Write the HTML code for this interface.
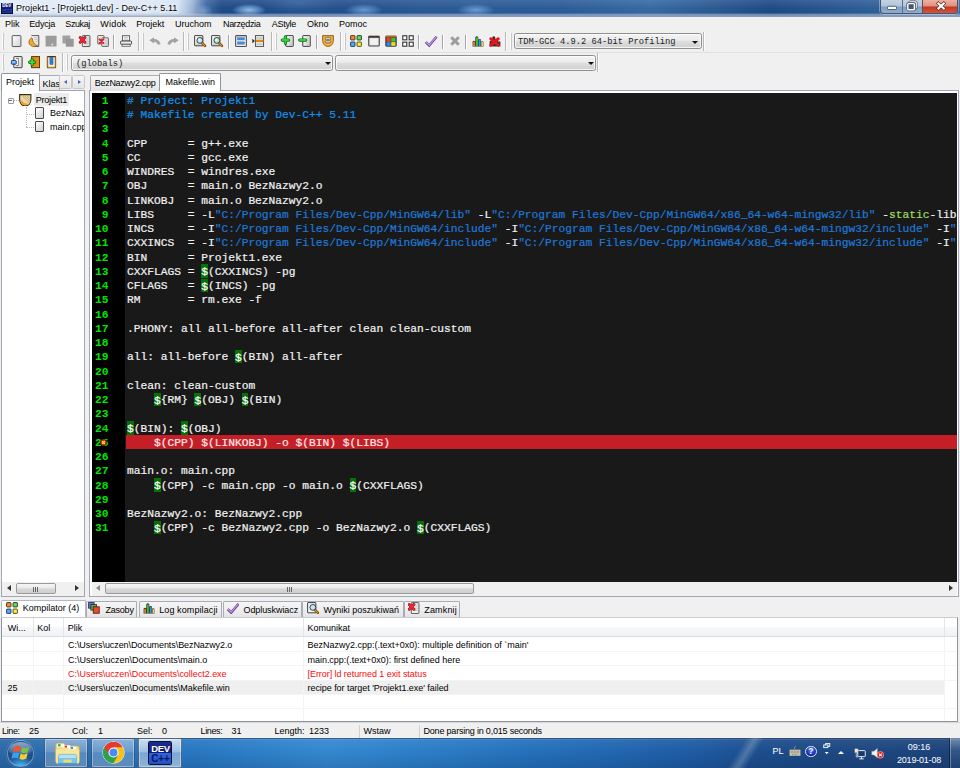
<!DOCTYPE html>
<html lang="pl">
<head>
<meta charset="utf-8">
<title>Projekt1 - [Projekt1.dev] - Dev-C++ 5.11</title>
<style>
*{box-sizing:border-box;margin:0;padding:0}
html,body{width:960px;height:768px;overflow:hidden;background:#f0f0f0}
body{position:relative;font-family:"Liberation Sans",sans-serif;font-size:9px;color:#000;line-height:1}
#app div{position:absolute}
#app{position:absolute;left:0;top:0;width:960px;height:768px;overflow:hidden}
.t{white-space:nowrap;font-size:9px;line-height:11px;height:11px}
/* title bar */
#title{left:0;top:0;width:960px;height:17px;background:
linear-gradient(180deg,rgba(255,255,255,0) 0,rgba(255,255,255,0) 76%,rgba(190,206,228,.55) 86%,rgba(150,168,196,.95) 100%),
linear-gradient(90deg,#e3ecf8 0,#dee8f6 150px,#d6e3f3 178px,rgba(190,210,236,.8) 192px,rgba(120,160,210,.35) 206px,rgba(80,120,180,0) 222px),
radial-gradient(ellipse 17px 6px at 249px 10px,rgba(150,195,238,.95),rgba(130,180,230,.5) 60%,rgba(120,170,225,0)),
radial-gradient(ellipse 9px 7px at 204px 11px,rgba(150,180,220,.6),rgba(120,170,225,0)),
radial-gradient(ellipse 19px 6px at 364px 10px,rgba(120,170,222,.8),rgba(110,160,215,.4) 60%,rgba(120,170,225,0)),
radial-gradient(ellipse 19px 6px at 476px 10px,rgba(125,175,226,.8),rgba(110,160,215,.4) 60%,rgba(120,170,225,0)),
radial-gradient(ellipse 40px 12px at 300px 3px,rgba(70,115,175,.5),rgba(70,115,175,0)),
linear-gradient(90deg,#204b88 0,#204b88 230px,#234f8c 330px,#2a5994 420px,#2c5c98 560px,#376aa2 650px,#2a5890 720px,#1f4a85 770px,#2c5a94 850px,#35649c 900px,#3a689f 960px)}
#title .shade{left:0;top:0;width:960px;height:17px;background:linear-gradient(180deg,rgba(255,255,255,.10) 0,rgba(255,255,255,0) 50%,rgba(0,0,0,.04) 100%)}
#title .edge{left:0;top:16.500px;width:960px;height:.5px;background:#8e9bb0}
/* menu */
#menu{left:0;top:17px;width:960px;height:15px;background:#f0f0f0}

/* window buttons */
#wb{left:880px;top:0;width:78px;height:14px;border:1px solid #44556e;border-top:none;border-radius:0 0 4px 4px;overflow:hidden;box-shadow:0 0 0 1px rgba(255,255,255,.35)}
#wb .b{top:0;height:13px;background:linear-gradient(180deg,#c3d1e4 0,#b2c4dc 48%,#809fc5 52%,#8fadd0 100%)}
#wb .x{background:linear-gradient(180deg,#eeb0a2 0,#e08e7e 48%,#c5361f 52%,#d0563c 100%)}
/* toolbars */
.grip{width:2px;height:17px;border-left:1px solid #fbfbfb;border-right:1px solid #c6c6c6}
.tend{width:2px;height:19px;border-left:1px solid #b8b8b8;border-right:1px solid #fbfbfb}
.sep{width:2px;height:14px;border-left:1px solid #a5a5a5;border-right:1px solid #fff}
.ic{width:12px;height:12px}
.ic svg{position:absolute;left:0;top:0;width:12px;height:12px;overflow:visible}
.combo{height:16px;border:1px solid #8e8f8f;border-radius:2.5px;background:linear-gradient(180deg,#f4f4f4 0,#ebebeb 45%,#dedede 50%,#d0d0d0 100%);box-shadow:inset 0 0 0 1px rgba(255,255,255,.75)}
.combo .arr{width:0;height:0;border-left:3px solid transparent;border-right:3px solid transparent;border-top:3.500px solid #111}
.mono{font-family:"Liberation Mono",monospace;font-size:8.75px;line-height:11px;white-space:pre;color:#222}

.tab{background:linear-gradient(180deg,#f5f5f5 0,#eeeeee 50%,#e4e4e4 100%);border:1px solid #a9adb3;border-bottom:none;border-radius:1.500px 1.500px 0 0}
.tab.act{background:#fff;border-color:#8e959e}
.sbtn{width:12.500px;height:14px;background:linear-gradient(180deg,#f6f6f6,#e4e4e4);border:1px solid #c8c8c8;border-radius:1.500px}
.sbtn div{width:0;height:0}
.fi{width:9px;height:11.700px;border:1px solid #4a4a4a;border-radius:1px;background:linear-gradient(135deg,#fff,#d0d0d0)}
.al{width:0;height:0;border-top:3px solid transparent;border-bottom:3px solid transparent;border-right:4px solid #333}
.ar{width:0;height:0;border-top:3px solid transparent;border-bottom:3px solid transparent;border-left:4px solid #333}
.thumb{border:1px solid #9a9a9a;border-radius:2px;background:linear-gradient(180deg,#f6f6f6 0,#e9e9e9 48%,#d8d8d8 52%,#cfcfcf 100%)}
.gr{width:5px;height:4.500px;background:repeating-linear-gradient(90deg,#666 0,#666 1px,transparent 1px,transparent 2px)}
.vs{width:1px;background:#e2e5ea}
.vg{width:1px;background:#f4f4f4}
.row{left:0;width:957px;height:14.250px;border-bottom:1px solid #f4f4f4}
.row.err .t{color:#f60c0c}
.row.sel{background:#efefef;width:942px}

.tbb{width:44px;height:29.500px;border:1px solid rgba(20,45,80,.55);border-radius:2px;background:linear-gradient(180deg,rgba(255,255,255,.42) 0,rgba(255,255,255,.3) 45%,rgba(255,255,255,.2) 50%,rgba(255,255,255,.26) 100%);box-shadow:inset 0 0 0 1px rgba(255,255,255,.35)}
.tbb.on{background:linear-gradient(180deg,rgba(255,255,255,.75) 0,rgba(255,255,255,.55) 45%,rgba(255,255,255,.38) 50%,rgba(255,255,255,.5) 100%)}
/* editor */
#code{left:92px;top:93px;width:864.500px;height:488.600px;background:#191919;overflow:hidden}
#gutter{left:0;top:0;width:33px;height:489px;background:#000}
.ln{letter-spacing:-.008px;-webkit-text-stroke:.22px currentColor;left:0;width:900px;height:14.25px;font-family:"Liberation Mono","DejaVu Sans Mono",monospace;font-size:11.25px;line-height:14.25px;white-space:pre;color:#f0f0f0}
.ln .n{left:0;top:0;width:16.5px;height:14.25px;text-align:right;font-weight:bold;color:#00e400;-webkit-text-stroke:0}
.ln .c{left:35px;top:0;height:14.25px}
.ln i{font-style:normal;color:#1290ea}
.ln u{text-decoration:none;background:#047204;color:#fff;padding-top:1.500px}
.ln s{text-decoration:none;color:#1f78d6}
.ln em{font-style:normal;color:#9fdc5c}
.hl .c{color:#ffe6e6}
#hb{left:34px;top:341.800px;width:900px;height:14.600px;background:#c41f27}
</style>
</head>
<body>
<div id="app">
<div id="title"><div class="shade"></div><div class="edge"></div>
<div style="left:1px;top:2.500px;width:11.500px;height:11px;background:linear-gradient(180deg,#1a2a8a 0,#141c70 50%,#2a4ab8 52%,#16309a 100%);border:1px solid #0a0f3a"></div>
<div class="t" style="left:1.500px;top:2.500px;width:10.500px;height:6px;line-height:6px;font-size:4.500px;font-weight:bold;color:#fff;text-align:center;letter-spacing:-.1px">DEV</div>
<div class="t" style="left:1.500px;top:7.500px;width:10.500px;height:6px;line-height:6px;font-size:4.500px;font-weight:bold;color:#12124a;text-align:center">C++</div>
<div class="t" style="left:16px;top:3px;letter-spacing:.05px;text-shadow:0 0 3px #fff,0 0 5px #fff">Projekt1 - [Projekt1.dev] - Dev-C++ 5.11</div>
</div>
<div id="menu">
<div class="t" style="left:5px;top:2px">Plik</div>
<div class="t" style="left:29.300px;top:2px;letter-spacing:-.2px">Edycja</div>
<div class="t" style="left:65.300px;top:2px;letter-spacing:-.4px">Szukaj</div>
<div class="t" style="left:100.300px;top:2px;letter-spacing:.2px">Widok</div>
<div class="t" style="left:136.300px;top:2px">Projekt</div>
<div class="t" style="left:175px;top:2px">Uruchom</div>
<div class="t" style="left:223px;top:2px;letter-spacing:-.35px">Narzędzia</div>
<div class="t" style="left:271.800px;top:2px;letter-spacing:-.3px">AStyle</div>
<div class="t" style="left:307px;top:2px">Okno</div>
<div class="t" style="left:339px;top:2px">Pomoc</div>
</div>
<div id="wb">
<div class="b" style="left:0;width:21px"><svg width="21" height="13" viewBox="0 0 21 13" style="position:absolute;left:0;top:0"><rect x="6.5" y="6.3" width="9" height="3.2" rx="0.8" fill="#fff" stroke="#44536b" stroke-width="0.9"/></svg></div>
<div class="b" style="left:21px;width:20px;border-left:1px solid #5b6d88"><svg width="20" height="13" viewBox="0 0 20 13" style="position:absolute;left:0;top:0"><rect x="6.6" y="1.9" width="6.6" height="6.2" rx="0.8" fill="none" stroke="#44536b" stroke-width="2.6"/><rect x="6.6" y="1.9" width="6.6" height="6.2" rx="0.8" fill="none" stroke="#fff" stroke-width="1.2"/><rect x="4.8" y="3.6" width="6.6" height="6.2" rx="0.8" fill="#9db3cf" stroke="#44536b" stroke-width="2.8"/><rect x="4.8" y="3.6" width="6.6" height="6.2" rx="0.8" fill="#46566e" stroke="#fff" stroke-width="1.4"/></svg></div>
<div class="b x" style="left:41px;width:36px;border-left:1px solid #6b4a4a"><svg width="36" height="13" viewBox="0 0 36 13" style="position:absolute;left:0;top:0"><path d="M15.400 3.400 L20.800 8.400 M20.800 3.400 L15.400 8.400" stroke="#5a2a24" stroke-width="3.400" stroke-linecap="square"/><path d="M15.400 3.400 L20.800 8.400 M20.800 3.400 L15.400 8.400" stroke="#fff" stroke-width="2.100" stroke-linecap="square"/></svg></div>
</div>

<!-- toolbar row 1 -->
<div id="tb1" style="left:0;top:32px;width:960px;height:20px">
<div class="grip" style="left:2px;top:1px"></div>
<div class="ic" style="left:11px;top:3px"><svg viewBox="0 0 16 16"><defs><linearGradient id="pg" x1="0" y1="0" x2="1" y2="1"><stop offset="0" stop-color="#fff"/><stop offset="1" stop-color="#d4d4d4"/></linearGradient></defs><rect x="1.6" y="0.8" width="11.6" height="14.6" rx="0.8" fill="url(#pg)" stroke="#4a4a4a" stroke-width="1.2"/></svg></div>
<div class="ic" style="left:28px;top:3px"><svg viewBox="0 0 16 16"><path d="M4.600 0.800 H14.400 V15.200 H8" fill="url(#pg)" stroke="#4a4a4a" stroke-width="1.200"/><path d="M7.500 3.500h5M8 6h4.500M9.500 8.500h3" stroke="#b8b8b8" stroke-width="0.900"/><path d="M5 3.600 C3 4.600 1 7.500 1.200 10 C1.500 13.500 5 15.400 8.500 15.400 C10.500 15.400 12 15.200 13.200 14.800 C9.500 13.800 6 10 5.600 4Z" fill="#f5a928" stroke="#7a4a10" stroke-width="0.900"/></svg></div>
<div class="ic" style="left:45px;top:3px"><svg viewBox="0 0 16 16"><rect x="0.800" y="1" width="14.6" height="14.4" rx="0.8" fill="#9b9b9b"/><rect x="8.6" y="11.6" width="2.2" height="2.2" fill="#e8e8e8"/></svg></div>
<div class="ic" style="left:62px;top:3px"><svg viewBox="0 0 16 16"><rect x="0.600" y="0.800" width="10.4" height="10.4" rx="0.8" fill="#a2a2a2"/><rect x="5" y="5" width="10.6" height="10.6" rx="0.8" fill="#979797"/></svg></div>
<div class="ic" style="left:79px;top:3px"><svg viewBox="0 0 16 16"><rect x="4.400" y="0.800" width="10.2" height="14.6" rx="0.8" fill="url(#pg)" stroke="#4a4a4a" stroke-width="1.2"/><path d="M9 4h4M9 6.500h4M9 9h4M9 11.500h4" stroke="#b0b0b0" stroke-width="0.9"/><path d="M1.600 3.400 L7.800 9.600 M7.800 3.400 L1.600 9.600" stroke="#8a1018" stroke-width="4" stroke-linecap="round"/><path d="M1.600 3.400 L7.800 9.600 M7.800 3.400 L1.600 9.600" stroke="#ee2630" stroke-width="2.800" stroke-linecap="round"/></svg></div>
<div class="ic" style="left:97px;top:3px"><svg viewBox="0 0 16 16"><rect x="1" y="0.800" width="8.4" height="11" rx="0.6" fill="url(#pg)" stroke="#4a4a4a" stroke-width="1.100"/><rect x="6.400" y="3.800" width="8.8" height="11.4" rx="0.6" fill="url(#pg)" stroke="#4a4a4a" stroke-width="1.100"/><path d="M10 7h4M10 9.500h4M10 12h4" stroke="#b0b0b0" stroke-width="0.9"/><path d="M3.400 5.600 L8.600 10.800 M8.600 5.600 L3.400 10.800" stroke="#e0202a" stroke-width="2.6" stroke-linecap="round"/></svg></div>
<div class="sep" style="left:113px;top:3px"></div>
<div class="ic" style="left:120px;top:3px"><svg viewBox="0 0 16 16"><rect x="3.400" y="1" width="9.4" height="7" fill="#f4f4f4" stroke="#4a4a4a" stroke-width="1.100"/><path d="M5.500 3.500h5M5.500 5.500h5" stroke="#aaa" stroke-width="0.8"/><rect x="0.800" y="8" width="14.6" height="4.400" rx="1" fill="#e8e8e8" stroke="#3c3c3c" stroke-width="1.200"/><rect x="2.600" y="12.400" width="11" height="2.600" fill="#fafafa" stroke="#4a4a4a" stroke-width="1"/></svg></div>
<div class="tend" style="left:138px;top:0"></div>
<div class="grip" style="left:142px;top:1px"></div>
<div class="ic" style="left:149px;top:3px"><svg viewBox="0 0 16 16"><path d="M0.600 7 L6.600 3 V5.200 C10.500 5.200 14.600 7.400 15.400 12.200 L11.600 13 C11 10.400 9 9 6.600 9 V11.200Z" fill="#a2a2a2"/></svg></div>
<div class="ic" style="left:166.500px;top:3px"><svg viewBox="0 0 16 16"><path d="M15.400 7 L9.400 3 V5.200 C5.500 5.200 1.400 7.400 0.600 12.200 L4.400 13 C5 10.400 7 9 9.400 9 V11.200Z" fill="#a2a2a2"/></svg></div>
<div class="tend" style="left:183px;top:0"></div>
<div class="grip" style="left:187px;top:1px"></div>
<div class="ic" style="left:194px;top:3px"><svg viewBox="0 0 16 16"><rect x="0.800" y="0.800" width="11" height="13.6" rx="0.6" fill="url(#pg)" stroke="#3c3c3c" stroke-width="1.300"/><path d="M2.500 10.500h3M2.500 12.500h5" stroke="#bbb" stroke-width="0.8"/><path d="M10.500 10.500 L14.600 14.600" stroke="#4a3008" stroke-width="3.400" stroke-linecap="round"/><path d="M10.500 10.500 L14.600 14.600" stroke="#e08a10" stroke-width="1.900" stroke-linecap="round"/><circle cx="7.800" cy="7.200" r="3.900" fill="#bfe6fb" stroke="#3c3c3c" stroke-width="1.300"/><circle cx="7" cy="6.400" r="1.400" fill="#fff" opacity=".8"/></svg></div>
<div class="ic" style="left:211px;top:3px"><svg viewBox="0 0 16 16"><rect x="0.800" y="0.800" width="11" height="13.6" rx="0.6" fill="url(#pg)" stroke="#3c3c3c" stroke-width="1.300"/><path d="M2.500 10.500h3M2.500 12.500h5" stroke="#bbb" stroke-width="0.8"/><path d="M10.500 10.500 L14.600 14.600" stroke="#4a3008" stroke-width="3.400" stroke-linecap="round"/><path d="M10.500 10.500 L14.600 14.600" stroke="#e08a10" stroke-width="1.900" stroke-linecap="round"/><circle cx="7.800" cy="7.200" r="3.900" fill="#b6f0d2" stroke="#3c3c3c" stroke-width="1.300"/><circle cx="7" cy="6.400" r="1.400" fill="#fff" opacity=".8"/></svg></div>
<div class="sep" style="left:228px;top:3px"></div>
<div class="ic" style="left:234.500px;top:3px"><svg viewBox="0 0 16 16"><rect x="0.800" y="0.800" width="14.400" height="14.400" rx="1" fill="#e9e9e9" stroke="#505050" stroke-width="1.400"/><rect x="3.400" y="3.600" width="9.200" height="3" fill="#3f8fe8" stroke="#2a5fa8" stroke-width="0.500"/><rect x="3.400" y="9.200" width="9.200" height="3" fill="#3f8fe8" stroke="#2a5fa8" stroke-width="0.500"/></svg></div>
<div class="ic" style="left:251.500px;top:3px"><svg viewBox="0 0 16 16"><rect x="4.600" y="0.800" width="10.800" height="14.400" fill="#f2f2f2" stroke="#505050" stroke-width="1.300"/><path d="M5.500 4h9M5.500 12.200h9" stroke="#8a8a8a" stroke-width="0.9"/><rect x="5.200" y="6.200" width="9.800" height="3.400" fill="#d88a1c"/><path d="M0.400 5 L3.800 8 L0.400 11Z" fill="#222"/></svg></div>
<div class="tend" style="left:271px;top:0"></div>
<div class="grip" style="left:275px;top:1px"></div>
<div class="ic" style="left:282px;top:3px"><svg viewBox="0 0 16 16"><rect x="5" y="0.800" width="10" height="14.400" rx="0.600" fill="url(#pg)" stroke="#3c3c3c" stroke-width="1.300"/><path d="M9.500 4h4M9.500 7h4M9.500 10h4M9.500 12.500h4" stroke="#b8b8b8" stroke-width="0.9"/><path d="M4.600 2.400 V11 M0.400 6.700 H8.800" stroke="#0c6e12" stroke-width="4.400" stroke-linecap="round"/><path d="M4.600 2.600 V10.800 M0.600 6.700 H8.600" stroke="#2fd23a" stroke-width="2.600" stroke-linecap="round"/></svg></div>
<div class="ic" style="left:299px;top:3px"><svg viewBox="0 0 16 16"><rect x="5" y="0.800" width="10" height="14.400" rx="0.600" fill="url(#pg)" stroke="#3c3c3c" stroke-width="1.300"/><path d="M9.500 4h4M9.500 7h4M9.500 10h4M9.500 12.500h4" stroke="#b8b8b8" stroke-width="0.9"/><path d="M1 6.700 H9" stroke="#0c6e12" stroke-width="4.400" stroke-linecap="round"/><path d="M1.200 6.700 H8.800" stroke="#2fd23a" stroke-width="2.600" stroke-linecap="round"/></svg></div>
<div class="sep" style="left:316px;top:3px"></div>
<div class="ic" style="left:322px;top:3px"><svg viewBox="0 0 16 16"><path d="M0.800 0.800 H15.200 V7 C15.200 12 12 15.200 8 15.200 C4 15.200 0.800 12 0.800 7Z" fill="#f6ad2e" stroke="#8a5a10" stroke-width="1.200"/><rect x="4.400" y="3.400" width="7.200" height="2.800" rx="1.200" fill="#d6d6d6" stroke="#555" stroke-width="0.900"/><rect x="4.400" y="7.600" width="7.200" height="2.800" rx="1.200" fill="#d6d6d6" stroke="#555" stroke-width="0.900"/></svg></div>
<div class="tend" style="left:339.500px;top:0"></div>
<div class="grip" style="left:343.500px;top:1px"></div>
<div class="ic" style="left:350px;top:3px"><svg viewBox="0 0 16 16"><rect x="0.800" y="0.800" width="5.800" height="5.800" rx="0.700" fill="#f58a3a" stroke="#4a2a10" stroke-width="1.200"/><rect x="9.400" y="0.800" width="5.800" height="5.800" rx="0.700" fill="#6ada58" stroke="#143a10" stroke-width="1.200"/><rect x="0.800" y="9.400" width="5.800" height="5.800" rx="0.700" fill="#58acf4" stroke="#10305a" stroke-width="1.200"/><rect x="9.400" y="9.400" width="5.800" height="5.800" rx="0.700" fill="#f8ee48" stroke="#4a4410" stroke-width="1.200"/></svg></div>
<div class="ic" style="left:367.500px;top:3px"><svg viewBox="0 0 16 16"><rect x="1" y="1.600" width="14" height="13" rx="0.800" fill="#e6e6e6" stroke="#3a3a3a" stroke-width="1.400"/><rect x="1" y="1.200" width="14" height="2.600" fill="#4a3a2a"/><rect x="3" y="5.400" width="10" height="7.400" fill="#f2f2f2"/></svg></div>
<div class="ic" style="left:384.500px;top:3px"><svg viewBox="0 0 16 16"><rect x="1" y="1.600" width="14" height="13.400" rx="0.800" fill="#444" stroke="#3a3a3a" stroke-width="1.200"/><rect x="1" y="1" width="14" height="2.400" fill="#b86a1a"/><rect x="2" y="4" width="5.600" height="5" fill="#e84020"/><rect x="8.400" y="4" width="5.600" height="5" fill="#3cc030"/><rect x="2" y="9.600" width="5.600" height="4.800" fill="#2a8af0"/><rect x="8.400" y="9.600" width="5.600" height="4.800" fill="#f0e020"/></svg></div>
<div class="ic" style="left:402px;top:3px"><svg viewBox="0 0 16 16"><rect x="1" y="1" width="5.400" height="5.400" fill="#fafafa" stroke="#3a3a3a" stroke-width="1.500"/><rect x="9.600" y="1" width="5.400" height="5.400" fill="#fafafa" stroke="#3a3a3a" stroke-width="1.500"/><rect x="1" y="9.600" width="5.400" height="5.400" fill="#fafafa" stroke="#3a3a3a" stroke-width="1.500"/><rect x="9.600" y="9.600" width="5.400" height="5.400" fill="#fafafa" stroke="#3a3a3a" stroke-width="1.500"/></svg></div>
<div class="sep" style="left:418px;top:3px"></div>
<div class="ic" style="left:425px;top:3px"><svg viewBox="0 0 16 16"><path d="M1 9.500 L5.600 14 L15.400 2.400" fill="none" stroke="#5a3a8a" stroke-width="3.400" stroke-linejoin="miter"/><path d="M1.400 9.600 L5.600 13.400 L15 2.600" fill="none" stroke="#c89af0" stroke-width="1.600"/></svg></div>
<div class="sep" style="left:441.500px;top:3px"></div>
<div class="ic" style="left:448.500px;top:3px"><svg viewBox="0 0 16 16"><path d="M3 3 L13 13 M13 3 L3 13" stroke="#9c9c9c" stroke-width="4" stroke-linecap="butt"/></svg></div>
<div class="sep" style="left:465px;top:3px"></div>
<div class="ic" style="left:472px;top:3px"><svg viewBox="0 0 16 16"><path d="M0.800 15.200 V8.600 Q2.600 7 4.400 8.600 V3 Q6.400 0.500 8.400 3 V6 Q10.200 4.600 12 6 V9 Q13.600 7.800 15.200 9 V15.200Z" fill="#333"/><rect x="1.500" y="9" width="2.400" height="5.800" fill="#f08020"/><rect x="5.100" y="3.200" width="2.800" height="11.600" fill="#40c030"/><rect x="8.900" y="6.200" width="2.600" height="8.600" fill="#3a90f0"/><rect x="12.500" y="9.400" width="2.200" height="5.400" fill="#f4e030"/></svg></div>
<div class="ic" style="left:489px;top:3px"><svg viewBox="0 0 16 16"><path d="M0.800 15.200 V8.600 Q2.600 7 4.400 8.600 V3 Q6.400 0.500 8.400 3 V6 Q10.200 4.600 12 6 V9 Q13.600 7.800 15.200 9 V15.200Z" fill="#333"/><path d="M2.400 5 L12.400 13.600 M12.400 5 L2.400 13.600" stroke="#e8141c" stroke-width="4" stroke-linecap="round"/></svg></div>
<div class="tend" style="left:505px;top:0"></div>
<div class="grip" style="left:509.500px;top:1px"></div>
<div class="combo" style="left:514px;top:1px;width:188px"><div class="mono" style="left:3px;top:3.300px">TDM-GCC 4.9.2 64-bit Profiling</div><div class="arr" style="left:177px;top:6.500px"></div></div>
<div class="tend" style="left:703px;top:0"></div>
</div>

<div style="left:0;top:52px;width:960px;height:1px;background:#e0e0e0"></div>
<!-- toolbar row 2 -->
<div id="tb2" style="left:0;top:53px;width:960px;height:20px">
<div class="grip" style="left:2px;top:1px"></div>
<div class="ic" style="left:11px;top:2.700px"><svg viewBox="0 0 16 16"><rect x="3.800" y="0.800" width="11" height="14.800" rx="0.600" fill="url(#pg)" stroke="#3c3c3c" stroke-width="1.300"/><path d="M6.500 3.200 H9.800 V12.800 H6.500" fill="#fff" stroke="#5a5a5a" stroke-width="1"/><rect x="0.600" y="6" width="6.400" height="5" rx="0.800" fill="#5aa6f2" stroke="#1a2a5a" stroke-width="1.100"/><rect x="1.600" y="7" width="4" height="1.600" fill="#a8d4fa"/></svg></div>
<div class="ic" style="left:28px;top:2.700px"><svg viewBox="0 0 16 16"><rect x="4.800" y="0.800" width="10.600" height="14.800" fill="#e38c0c" stroke="#4a2a08" stroke-width="1.200"/><path d="M5.400 5.200 V11.400 M2.300 8.300 H8.500" stroke="#0a5a10" stroke-width="4.400" stroke-linecap="round"/><path d="M5.400 5.200 V11.400 M2.300 8.300 H8.500" stroke="#34e03c" stroke-width="2.600" stroke-linecap="round"/></svg></div>
<div class="ic" style="left:45.500px;top:2.700px"><svg viewBox="0 0 16 16"><rect x="1.800" y="0.800" width="11" height="14.800" rx="0.600" fill="#f6f2ea" stroke="#5a3408" stroke-width="1.400"/><path d="M2.400 1.400 V15 H12.200 V1.400" fill="none" stroke="#d8880c" stroke-width="1.100"/><rect x="5.200" y="1.600" width="4.200" height="9.800" fill="#1a86e0" stroke="#0c4a98" stroke-width="0.500"/></svg></div>
<div class="tend" style="left:61.500px;top:0"></div>
<div class="grip" style="left:66px;top:1px"></div>
<div class="combo" style="left:71px;top:1.500px;width:262px"><div class="mono" style="left:4px;top:3px">(globals)</div><div class="arr" style="left:253px;top:6px"></div></div>
<div class="combo" style="left:334.500px;top:1.500px;width:261px"><div class="arr" style="left:252.500px;top:6px"></div></div>
<div class="tend" style="left:597px;top:0"></div>
</div>
<!-- left panel -->
<div id="lp" style="left:0;top:72px;width:88px;height:526px">
<div style="left:1px;top:18px;width:84px;height:507px;background:#fff;border:1px solid #a0a7b2"></div>
<div class="tab" style="left:39px;top:3px;width:21px;height:15px;overflow:hidden"><div class="t" style="left:2.500px;top:3px">Klas</div></div>
<div class="tab act" style="left:1px;top:1px;width:39px;height:18px"><div class="t" style="left:4px;top:3px">Projekt</div></div>
<div class="sbtn" style="left:59px;top:2.700px"><div style="left:3.500px;top:4.500px;border-top:2.500px solid transparent;border-bottom:2.500px solid transparent;border-right:3px solid #5060ba"></div></div>
<div class="sbtn" style="left:72px;top:2.700px"><div style="left:5px;top:4.500px;border-top:2.500px solid transparent;border-bottom:2.500px solid transparent;border-left:3px solid #5060ba"></div></div>
<!-- tree -->
<div style="left:7.500px;top:25.500px;width:6px;height:6px;border:1px solid #969696;background:#fcfcfc;border-radius:1px"><div style="left:0.600px;top:1.500px;width:3px;height:1px;background:#4a5a9a"></div></div>
<div style="left:13.500px;top:28px;width:5px;height:0;border-top:1px dotted #bcbcbc"></div>
<div style="left:25.500px;top:35px;width:0;height:20px;border-left:1px dotted #bcbcbc"></div>
<div style="left:25.500px;top:41.800px;width:8px;height:0;border-top:1px dotted #bcbcbc"></div>
<div style="left:25.500px;top:54.800px;width:8px;height:0;border-top:1px dotted #bcbcbc"></div>
<div style="left:19px;top:21.500px;width:13px;height:13px"><svg viewBox="0 0 16 16" width="12.500" height="12.500" style="position:absolute;left:0;top:0"><path d="M0.800 0.800 H15.200 V7 C15.200 12 12 15.200 8 15.200 C4 15.200 0.800 12 0.800 7Z" fill="#e9d6a6" stroke="#3c2c12" stroke-width="1.400"/><path d="M1.600 6 C1.600 12 4.500 14.500 8 14.500 C10 14.500 11.500 13.800 12.600 12.600 C7 12.500 3.500 9.500 1.600 6Z" fill="#f0a020"/><path d="M4 2 L13 11 M7 2 L14.500 9.500 M10 2 L14.500 6.500" stroke="#b89858" stroke-width="0.900"/></svg></div>
<div style="left:34.400px;top:21.400px;width:34.400px;height:12.600px;background:#ebebeb"></div>
<div class="t" style="left:35.700px;top:22.700px;letter-spacing:-.2px">Projekt1</div>
<div class="fi" style="left:35px;top:35.300px"></div>
<div class="fi" style="left:35px;top:48.800px"></div>
<div style="left:0;top:0;width:84px;height:120px;overflow:hidden"><div class="t" style="left:50px;top:36.200px">BezNazwy2.cpp</div><div class="t" style="left:50px;top:49.700px">main.cpp</div></div>
<!-- hscroll -->
<div style="left:2px;top:510px;width:82px;height:13.500px;background:#f0f0f0"></div>
<div class="al" style="left:7px;top:512.500px"></div>
<div class="ar" style="left:74.500px;top:512.500px"></div>
<div class="thumb" style="left:16px;top:510.500px;width:40px;height:11.500px"><div class="gr" style="left:16px;top:3.500px"></div></div>
</div>

<!-- editor tabs + frame -->
<div style="left:88.500px;top:90px;width:870px;height:506.500px;background:#fff;border:1px solid #a0a7b2"></div>
<div class="tab" style="left:90px;top:75px;width:70px;height:15.500px"><div class="t" style="left:3.800px;top:1.800px;letter-spacing:-.3px">BezNazwy2.cpp</div></div>
<div class="tab act" style="left:158.800px;top:72.500px;width:62px;height:18.500px"><div class="t" style="left:5.700px;top:3px">Makefile.win</div></div>
<!-- editor hscroll -->
<div style="left:92px;top:581px;width:865px;height:14.500px;background:#f0f0f0"></div>
<div class="al" style="left:96px;top:585px;border-right-color:#8c8c8c"></div>
<div class="ar" style="left:948.500px;top:585px"></div>
<div class="thumb" style="left:105px;top:582.500px;width:369px;height:11.500px"><div class="gr" style="left:181px;top:3.500px"></div></div>
<div id="code">
<div id="gutter"></div>
<div id="hb"></div>
<div class="ln" style="top:0.75px"><div class="n">1</div><div class="c"><i># Project: Projekt1</i></div></div>
<div class="ln" style="top:15.00px"><div class="n">2</div><div class="c"><i># Makefile created by Dev-C++ 5.11</i></div></div>
<div class="ln" style="top:29.25px"><div class="n">3</div><div class="c"></div></div>
<div class="ln" style="top:43.50px"><div class="n">4</div><div class="c">CPP      = g++.exe</div></div>
<div class="ln" style="top:57.75px"><div class="n">5</div><div class="c">CC       = gcc.exe</div></div>
<div class="ln" style="top:72.00px"><div class="n">6</div><div class="c">WINDRES  = windres.exe</div></div>
<div class="ln" style="top:86.25px"><div class="n">7</div><div class="c">OBJ      = main.o BezNazwy2.o</div></div>
<div class="ln" style="top:100.50px"><div class="n">8</div><div class="c">LINKOBJ  = main.o BezNazwy2.o</div></div>
<div class="ln" style="top:114.75px"><div class="n">9</div><div class="c">LIBS     = -L<s>"C:/Program Files/Dev-Cpp/MinGW64/lib"</s> -L<s>"C:/Program Files/Dev-Cpp/MinGW64/x86_64-w64-mingw32/lib"</s> -<em>static</em>-libgcc -pg</div></div>
<div class="ln" style="top:129.00px"><div class="n">10</div><div class="c">INCS     = -I<s>"C:/Program Files/Dev-Cpp/MinGW64/include"</s> -I<s>"C:/Program Files/Dev-Cpp/MinGW64/x86_64-w64-mingw32/include"</s> -I<s>"C:/Program Files/Dev-Cpp/MinGW64/lib/gcc/x86_64-w64-mingw32/4.9.2/include"</s></div></div>
<div class="ln" style="top:143.25px"><div class="n">11</div><div class="c">CXXINCS  = -I<s>"C:/Program Files/Dev-Cpp/MinGW64/include"</s> -I<s>"C:/Program Files/Dev-Cpp/MinGW64/x86_64-w64-mingw32/include"</s> -I<s>"C:/Program Files/Dev-Cpp/MinGW64/lib/gcc/x86_64-w64-mingw32/4.9.2/include"</s></div></div>
<div class="ln" style="top:157.50px"><div class="n">12</div><div class="c">BIN      = Projekt1.exe</div></div>
<div class="ln" style="top:171.75px"><div class="n">13</div><div class="c">CXXFLAGS = <u>$</u>(CXXINCS) -pg</div></div>
<div class="ln" style="top:186.00px"><div class="n">14</div><div class="c">CFLAGS   = <u>$</u>(INCS) -pg</div></div>
<div class="ln" style="top:200.25px"><div class="n">15</div><div class="c">RM       = rm.exe -f</div></div>
<div class="ln" style="top:214.50px"><div class="n">16</div><div class="c"></div></div>
<div class="ln" style="top:228.75px"><div class="n">17</div><div class="c">.PHONY: all all-before all-after clean clean-custom</div></div>
<div class="ln" style="top:243.00px"><div class="n">18</div><div class="c"></div></div>
<div class="ln" style="top:257.25px"><div class="n">19</div><div class="c">all: all-before <u>$</u>(BIN) all-after</div></div>
<div class="ln" style="top:271.50px"><div class="n">20</div><div class="c"></div></div>
<div class="ln" style="top:285.75px"><div class="n">21</div><div class="c">clean: clean-custom</div></div>
<div class="ln" style="top:300.00px"><div class="n">22</div><div class="c">    <u>$</u>{RM} <u>$</u>(OBJ) <u>$</u>(BIN)</div></div>
<div class="ln" style="top:314.25px"><div class="n">23</div><div class="c"></div></div>
<div class="ln" style="top:328.50px"><div class="n">24</div><div class="c"><u>$</u>(BIN): <u>$</u>(OBJ)</div></div>
<div class="ln hl" style="top:342.75px"><div class="n">25</div><div class="c">    $(CPP) $(LINKOBJ) -o $(BIN) $(LIBS)</div></div>
<div class="ln" style="top:357.00px"><div class="n">26</div><div class="c"></div></div>
<div class="ln" style="top:371.25px"><div class="n">27</div><div class="c">main.o: main.cpp</div></div>
<div class="ln" style="top:385.50px"><div class="n">28</div><div class="c">    <u>$</u>(CPP) -c main.cpp -o main.o <u>$</u>(CXXFLAGS)</div></div>
<div class="ln" style="top:399.75px"><div class="n">29</div><div class="c"></div></div>
<div class="ln" style="top:414.00px"><div class="n">30</div><div class="c">BezNazwy2.o: BezNazwy2.cpp</div></div>
<div class="ln" style="top:428.25px"><div class="n">31</div><div class="c">    <u>$</u>(CPP) -c BezNazwy2.cpp -o BezNazwy2.o <u>$</u>(CXXFLAGS)</div></div>
<div style="left:7.500px;top:345.500px;width:7px;height:7px;border-radius:50%;background:#e8201c;border:.5px solid #7a0a08"></div><svg viewBox="0 0 8 8" width="7" height="7" style="position:absolute;left:7.500px;top:345.500px"><path d="M2.300 2.300 L5.700 5.700 M5.700 2.300 L2.300 5.700" stroke="#ffe83a" stroke-width="1.300"/></svg>
</div>
<!-- bottom tabs -->
<div id="bt" style="left:0;top:598px;width:960px;height:20px">
<div class="tab" style="left:85.500px;top:3px;width:51.500px;height:15.500px"><svg viewBox="0 0 16 16" width="12" height="12" style="position:absolute;left:1.800px;top:0.300px"><rect x="0.800" y="0.800" width="7.400" height="7.400" fill="#7468d8" stroke="#2a205a" stroke-width="1.100"/><rect x="3.800" y="3.400" width="7.400" height="7.400" fill="#3ab84a" stroke="#1a3a1a" stroke-width="1.100"/><rect x="7" y="6.400" width="8" height="8.600" fill="#e84a2a" stroke="#5a1a10" stroke-width="1.100"/></svg><div class="t" style="left:18.900px;top:2.500px;letter-spacing:-.2px">Zasoby</div></div>
<div class="tab" style="left:138.500px;top:3px;width:83.500px;height:15.500px"><svg viewBox="0 0 16 16" width="12" height="12" style="position:absolute;left:3px;top:0.300px"><path d="M0.800 15.200 V8.600 Q2.600 7 4.400 8.600 V3 Q6.400 0.500 8.400 3 V6 Q10.200 4.600 12 6 V9 Q13.600 7.800 15.200 9 V15.200Z" fill="#333"/><rect x="1.700" y="9.200" width="2.200" height="5.600" fill="#f08020"/><rect x="5.300" y="3.400" width="2.400" height="11.400" fill="#40c030"/><rect x="9.100" y="6.400" width="2.400" height="8.400" fill="#3a90f0"/><rect x="12.700" y="9.600" width="2" height="5.200" fill="#f4e030"/></svg><div class="t" style="left:19.700px;top:2.500px;letter-spacing:.1px">Log kompilacji</div></div>
<div class="tab" style="left:222.500px;top:3px;width:79px;height:15.500px"><svg viewBox="0 0 16 16" width="12" height="12" style="position:absolute;left:3.200px;top:0.300px"><path d="M1 9.500 L5.600 14 L15.400 2.400" fill="none" stroke="#5a3a8a" stroke-width="3.400"/><path d="M1.400 9.600 L5.600 13.400 L15 2.600" fill="none" stroke="#c89af0" stroke-width="1.600"/></svg><div class="t" style="left:20px;top:2.500px;letter-spacing:-.08px">Odpluskwiacz</div></div>
<div class="tab" style="left:302px;top:3px;width:101.500px;height:15.500px"><svg viewBox="0 0 16 16" width="12" height="12" style="position:absolute;left:3.700px;top:0.300px"><rect x="0.800" y="0.800" width="11" height="13.600" rx="0.600" fill="#f4f4f4" stroke="#3c3c3c" stroke-width="1.300"/><path d="M10.500 10.500 L14.600 14.600" stroke="#4a3008" stroke-width="3.400" stroke-linecap="round"/><path d="M10.500 10.500 L14.600 14.600" stroke="#e08a10" stroke-width="1.900" stroke-linecap="round"/><circle cx="7.800" cy="7.200" r="3.900" fill="#bfe6fb" stroke="#3c3c3c" stroke-width="1.300"/></svg><div class="t" style="left:20.500px;top:2.500px;letter-spacing:-.03px">Wyniki poszukiwań</div></div>
<div class="tab" style="left:404px;top:3px;width:56px;height:15.500px"><svg viewBox="0 0 16 16" width="12" height="12" style="position:absolute;left:3px;top:0.300px"><rect x="4.400" y="0.800" width="10.200" height="14.600" rx="0.800" fill="#f0f0f0" stroke="#4a4a4a" stroke-width="1.200"/><path d="M9 4h4M9 6.500h4M9 9h4M9 11.500h4" stroke="#b0b0b0" stroke-width="0.900"/><path d="M1.600 3.400 L7.800 9.600 M7.800 3.400 L1.600 9.600" stroke="#8a1018" stroke-width="4" stroke-linecap="round"/><path d="M1.600 3.400 L7.800 9.600 M7.800 3.400 L1.600 9.600" stroke="#ee2630" stroke-width="2.800" stroke-linecap="round"/></svg><div class="t" style="left:19.300px;top:2.500px;letter-spacing:.15px">Zamknij</div></div>
<div class="tab act" style="left:1px;top:1.500px;width:85px;height:18px;border-color:#b4b9c0"><svg viewBox="0 0 16 16" width="12" height="12" style="position:absolute;left:4.300px;top:1.300px"><rect x="0.800" y="0.800" width="5.800" height="5.800" rx="0.700" fill="#f58a3a" stroke="#4a2a10" stroke-width="1.200"/><rect x="9.400" y="0.800" width="5.800" height="5.800" rx="0.700" fill="#6ada58" stroke="#143a10" stroke-width="1.200"/><rect x="0.800" y="9.400" width="5.800" height="5.800" rx="0.700" fill="#58acf4" stroke="#10305a" stroke-width="1.200"/><rect x="9.400" y="9.400" width="5.800" height="5.800" rx="0.700" fill="#f8ee48" stroke="#4a4410" stroke-width="1.200"/></svg><div class="t" style="left:20.700px;top:2.500px">Kompilator (4)</div></div>
</div>
<!-- list -->
<div id="lv" style="left:1px;top:617px;width:957px;height:104.500px;background:#fff;border:1px solid #8e959e;border-top-color:#c8ccd2;overflow:hidden">
<div style="left:0;top:0;width:960px;height:18.700px;background:linear-gradient(180deg,#fff 0,#fff 45%,#f6f7f9 55%,#f1f2f5 100%);border-bottom:1px solid #d8dde5"></div>
<div class="vs" style="left:31px;top:0;height:18px"></div>
<div class="vs" style="left:61px;top:0;height:18px"></div>
<div class="vs" style="left:300.500px;top:0;height:18px"></div>
<div class="vs" style="left:942px;top:0;height:18px"></div>
<div class="t" style="left:5.700px;top:5px">Wi...</div>
<div class="t" style="left:35.200px;top:5px">Kol</div>
<div class="t" style="left:65.700px;top:5px">Plik</div>
<div class="t" style="left:305.500px;top:5px">Komunikat</div>
<div class="row" style="top:19.750px"><div class="t" style="left:66.100px;top:2.500px;letter-spacing:-.08px">C:\Users\uczen\Documents\BezNazwy2.o</div><div class="t" style="left:305.500px;top:2.500px">BezNazwy2.cpp:(.text+0x0): multiple definition of `main'</div></div>
<div class="row" style="top:34.000px"><div class="t" style="left:66.100px;top:2.500px">C:\Users\uczen\Documents\main.o</div><div class="t" style="left:305.500px;top:2.500px;letter-spacing:-.03px">main.cpp:(.text+0x0): first defined here</div></div>
<div class="row err" style="top:48.250px"><div class="t" style="left:66.100px;top:2.500px;letter-spacing:-.03px">C:\Users\uczen\Documents\collect2.exe</div><div class="t" style="left:305.500px;top:2.500px;letter-spacing:-.06px">[Error] ld returned 1 exit status</div></div>
<div class="row sel" style="top:62.500px"><div class="t" style="left:5.600px;top:2.500px">25</div><div class="t" style="left:66.100px;top:2.500px">C:\Users\uczen\Documents\Makefile.win</div><div class="t" style="left:305.500px;top:2.500px;letter-spacing:-.05px">recipe for target 'Projekt1.exe' failed</div></div>
<div class="row" style="top:76.750px"></div>
<div class="row" style="top:91.000px"></div>
<div class="vg" style="left:31px;top:19px;height:90px"></div>
<div class="vg" style="left:61px;top:19px;height:90px"></div>
<div class="vg" style="left:300.500px;top:19px;height:90px"></div>
<div class="vg" style="left:942px;top:19px;height:90px"></div>
</div>
<!-- status bar -->
<div id="sb" style="left:0;top:722px;width:960px;height:16.500px;background:#f0f0f0;border-top:1px solid #d7d7d7">
<div class="t" style="left:2px;top:3px;letter-spacing:-.35px">Line:</div><div class="t" style="left:29px;top:3px">25</div>
<div class="t" style="left:72px;top:3px">Col:</div><div class="t" style="left:98px;top:3px">1</div>
<div class="t" style="left:137px;top:3px">Sel:</div><div class="t" style="left:162px;top:3px">0</div>
<div class="t" style="left:200.500px;top:3px;letter-spacing:-.35px">Lines:</div><div class="t" style="left:231.500px;top:3px">31</div>
<div class="t" style="left:274.500px;top:3px">Length:</div><div class="t" style="left:309px;top:3px">1233</div>
<div style="left:359px;top:2px;width:1px;height:13px;background:#d0d0d0"></div>
<div class="t" style="left:363.500px;top:3px">Wstaw</div>
<div style="left:419px;top:2px;width:1px;height:13px;background:#d0d0d0"></div>
<div class="t" style="left:423.500px;top:3px;letter-spacing:-.2px">Done parsing in 0,015 seconds</div>
</div>
<!-- taskbar -->
<div id="tk" style="left:0;top:738px;width:960px;height:30px;background:linear-gradient(90deg,#2b68a8 0,#2a72b8 120px,#2878c2 200px,#3488d0 330px,#2c7ec8 420px,#2572bc 520px,#2166b0 620px,#1e5aa2 700px,#1c4e8e 760px,#1d4984 820px,#1c437a 960px);overflow:hidden">
<div style="left:0;top:0;width:960px;height:30px;background:linear-gradient(180deg,rgba(255,255,255,.28) 0,rgba(255,255,255,.06) 8%,rgba(255,255,255,0) 45%,rgba(0,0,20,.12) 100%)"></div>
<div style="left:0;top:0;width:960px;height:1px;background:rgba(20,40,70,.55)"></div>
<div style="left:735px;top:-20px;width:16px;height:80px;background:linear-gradient(90deg,rgba(255,255,255,0),rgba(255,255,255,.22),rgba(255,255,255,0));transform:rotate(32deg)"></div>
<!-- start orb -->
<div style="left:6.800px;top:2.300px;width:27px;height:27px;border-radius:50%;background:radial-gradient(ellipse 60% 38% at 50% 100%,#48c0f0 0,rgba(60,170,230,.6) 50%,rgba(40,120,200,0) 100%),radial-gradient(circle at 50% 45%,#2a62a4 0,#1f508e 55%,#1a437c 100%);border:1.200px solid rgba(150,190,225,.65);box-shadow:0 0 0 .6px rgba(20,50,90,.6),0 0 2.500px .5px rgba(140,200,250,.4)"></div>
<div style="left:9px;top:3.500px;width:22.600px;height:12.500px;border-radius:11.300px 11.300px 7px 7px/9px 9px 3.500px 3.500px;background:linear-gradient(180deg,rgba(255,255,255,.5),rgba(255,255,255,.1))"></div>
<svg viewBox="-1 2 19 16" width="19" height="17.500" style="position:absolute;left:11px;top:6.200px"><path d="M2.200 4.200 C4.500 2.800 6.500 2.800 8.800 4 L7.600 9.200 C5.400 8.200 3.400 8.200 1 9.600Z" fill="#f0562a"/><path d="M10 4.400 C12.400 5.600 14.400 5.600 17 4.200 L15.800 9.400 C13.400 10.800 11.200 10.800 8.800 9.600Z" fill="#7cc342"/><path d="M0.600 10.800 C3 9.400 5 9.400 7.400 10.400 L6.200 15.600 C4 14.600 2 14.600 -0.600 16Z" fill="#3aa0ea"/><path d="M8.600 10.800 C11 12 13 12 15.600 10.600 L14.400 15.800 C12 17.200 9.800 17.200 7.400 16Z" fill="#fbc932"/></svg>
<!-- buttons -->
<div class="tbb" style="left:44.300px;top:.3px"></div>
<div class="tbb" style="left:91.300px;top:.3px"></div>
<div class="tbb on" style="left:137.800px;top:.3px"></div>
<!-- explorer -->
<svg viewBox="0 0 25 24" width="25" height="24" style="position:absolute;left:54.500px;top:3px"><path d="M0.800 4 Q0.800 2.200 2.600 2.200 H8 Q9.500 2.200 10 3.600 L10.600 5 H22.400 Q24.200 5 24.200 6.800 V20.600 Q24.200 22.400 22.400 22.400 H2.600 Q0.800 22.400 0.800 20.600Z" fill="#f4dc7e" stroke="#d2ae48" stroke-width="0.700"/><rect x="2" y="2.800" width="7" height="3.400" fill="#fdfdf6"/><rect x="8.600" y="4.200" width="6.400" height="3" fill="#fdfdf6"/><rect x="14.200" y="5.600" width="7" height="2.800" fill="#fdfdf6"/><rect x="3" y="3.200" width="2.600" height="2.200" fill="#24b43a"/><rect x="9.600" y="4.600" width="2.400" height="2" fill="#e0382c"/><rect x="15.600" y="5.900" width="2.400" height="2" fill="#2a8ae8"/><path d="M0.800 8.600 Q12 7.200 24.200 8.600 V20.600 Q24.200 22.400 22.400 22.400 H2.600 Q0.800 22.400 0.800 20.600Z" fill="#f8e798"/><path d="M5.400 13.400 H19.600 Q21.600 13.400 21.600 15.400 V22.800 H3.400 V15.400 Q3.400 13.400 5.400 13.400Z" fill="#78c6f0" stroke="#58a8dc" stroke-width="0.600"/><path d="M5.400 13.800 H19.600 Q21.200 13.800 21.200 15.400 V17 H3.800 V15.400 Q3.800 13.800 5.400 13.800Z" fill="#b4e0f8"/><rect x="8.400" y="18.600" width="8.200" height="3" fill="#f4d868"/><rect x="3.400" y="22" width="18.200" height="1.200" fill="#4a9ad0"/></svg>
<!-- chrome -->
<svg viewBox="0 0 24 24" width="23" height="23" style="position:absolute;left:101.500px;top:3px"><circle cx="12" cy="12" r="11.500" fill="#fff"/><path d="M12 12 L2.470 6.500 A11 11 0 0 1 21.530 6.500Z" fill="#e53a2f"/><path d="M12 12 L21.530 6.500 A11 11 0 0 1 12 23Z" fill="#f9c21b"/><path d="M12 12 L12 23 A11 11 0 0 1 2.470 6.500Z" fill="#2da24c"/><path d="M12 6.500 H21.530 A11 11 0 0 0 2.470 6.500 L7.240 14.750Z" fill="#e53a2f"/><path d="M16.760 14.750 L12 23 A11 11 0 0 0 21.530 6.500 H12Z" fill="#f9c21b"/><path d="M7.240 14.750 L2.470 6.500 A11 11 0 0 0 12 23 L16.760 14.750Z" fill="#2da24c"/><circle cx="12" cy="12" r="5.300" fill="#fff"/><circle cx="12" cy="12" r="4.200" fill="#4a8af4"/></svg>
<!-- dev icon -->
<div style="left:148px;top:3px;width:24px;height:24px;background:linear-gradient(180deg,#1c2c8c 0,#141e74 49%,#2f66dc 51%,#2450c0 100%);border:1px solid #0a0f3a;border-radius:1.500px"></div>
<div class="t" style="left:149.500px;top:4.500px;width:22px;text-align:center;color:#fff;font-weight:bold;font-size:9.500px;letter-spacing:-.3px">DEV</div>
<div class="t" style="left:149.500px;top:14.500px;width:22px;text-align:center;color:#0a1260;font-weight:bold;font-size:10px;letter-spacing:-.2px">C++</div>
<!-- tray -->
<div class="t" style="left:772.500px;top:8px;color:#fff;font-size:9px">PL</div>
<svg viewBox="0 0 16 14" width="12" height="10.500" style="position:absolute;left:788.500px;top:7.500px"><path d="M9 0 Q6 2 8 4.500" fill="none" stroke="#aaa" stroke-width="1"/><rect x="0.500" y="4.500" width="15" height="9" rx="1.500" fill="#c9c5b8" stroke="#6a675c" stroke-width="0.900"/><path d="M2.500 7h11M2.500 9h11M4 11.500h8" stroke="#7a776c" stroke-width="1" stroke-dasharray="1.200 0.800"/></svg>
<div style="left:805px;top:7.500px;width:11.500px;height:11.500px;border-radius:50%;background:radial-gradient(circle at 50% 30%,#5a7af0,#1428b0 70%,#0a1670);border:1px solid #dfe6f5"></div>
<div class="t" style="left:805px;top:8px;width:11.500px;text-align:center;color:#fff;font-weight:bold;font-size:8.500px">?</div>
<svg viewBox="0 0 10 16" width="7.500" height="12" style="position:absolute;left:823px;top:5px"><rect x="3.500" y="0.800" width="5.500" height="3.600" fill="none" stroke="#fff" stroke-width="1.200"/><rect x="1" y="2.600" width="5.500" height="3.600" fill="#2a5a94" stroke="#fff" stroke-width="1.200"/><path d="M2.400 12 H7.600 L5 15Z" fill="#fff"/></svg>
<div style="left:838px;top:12.500px;width:0;height:0;border-left:3px solid transparent;border-right:3px solid transparent;border-bottom:3.500px solid #fff"></div>
<svg viewBox="0 0 16 16" width="12" height="12" style="position:absolute;left:853.500px;top:9.500px"><rect x="0.600" y="0.600" width="5" height="6" fill="#e8e8e8" stroke="#555" stroke-width="0.800"/><rect x="5" y="3.500" width="10" height="8" rx="0.800" fill="#1a3a6a" stroke="#e8eef8" stroke-width="1.300"/><path d="M7 14.500 H13 M10 12 V14.500" stroke="#e8eef8" stroke-width="1.300"/><path d="M3 7 V12 H5" stroke="#ddd" stroke-width="1" fill="none"/></svg>
<svg viewBox="0 0 18 16" width="13.500" height="12" style="position:absolute;left:870.500px;top:9px"><path d="M1 5.500 H4 L8.500 1.500 V14.500 L4 10.500 H1Z" fill="#f2f2f2" stroke="#888" stroke-width="0.600"/><circle cx="12.500" cy="10.500" r="4.500" fill="#e0201c" stroke="#fff" stroke-width="0.600"/><path d="M10.700 8.700 L14.300 12.300 M14.300 8.700 L10.700 12.300" stroke="#fff" stroke-width="1.500"/></svg>
<div class="t" style="left:893px;top:4px;width:52px;text-align:center;color:#fff;font-size:9px">09:16</div>
<div class="t" style="left:893px;top:17px;width:52px;text-align:center;color:#fff;font-size:9px;letter-spacing:-.2px">2019-01-08</div>
<div style="left:949px;top:0;width:11px;height:30px;border-left:1px solid rgba(10,25,50,.8);background:linear-gradient(180deg,rgba(255,255,255,.35),rgba(255,255,255,.1) 40%,rgba(255,255,255,.03));box-shadow:inset 1px 0 0 rgba(255,255,255,.3)"></div>
</div>
</div>
</body>
</html>
